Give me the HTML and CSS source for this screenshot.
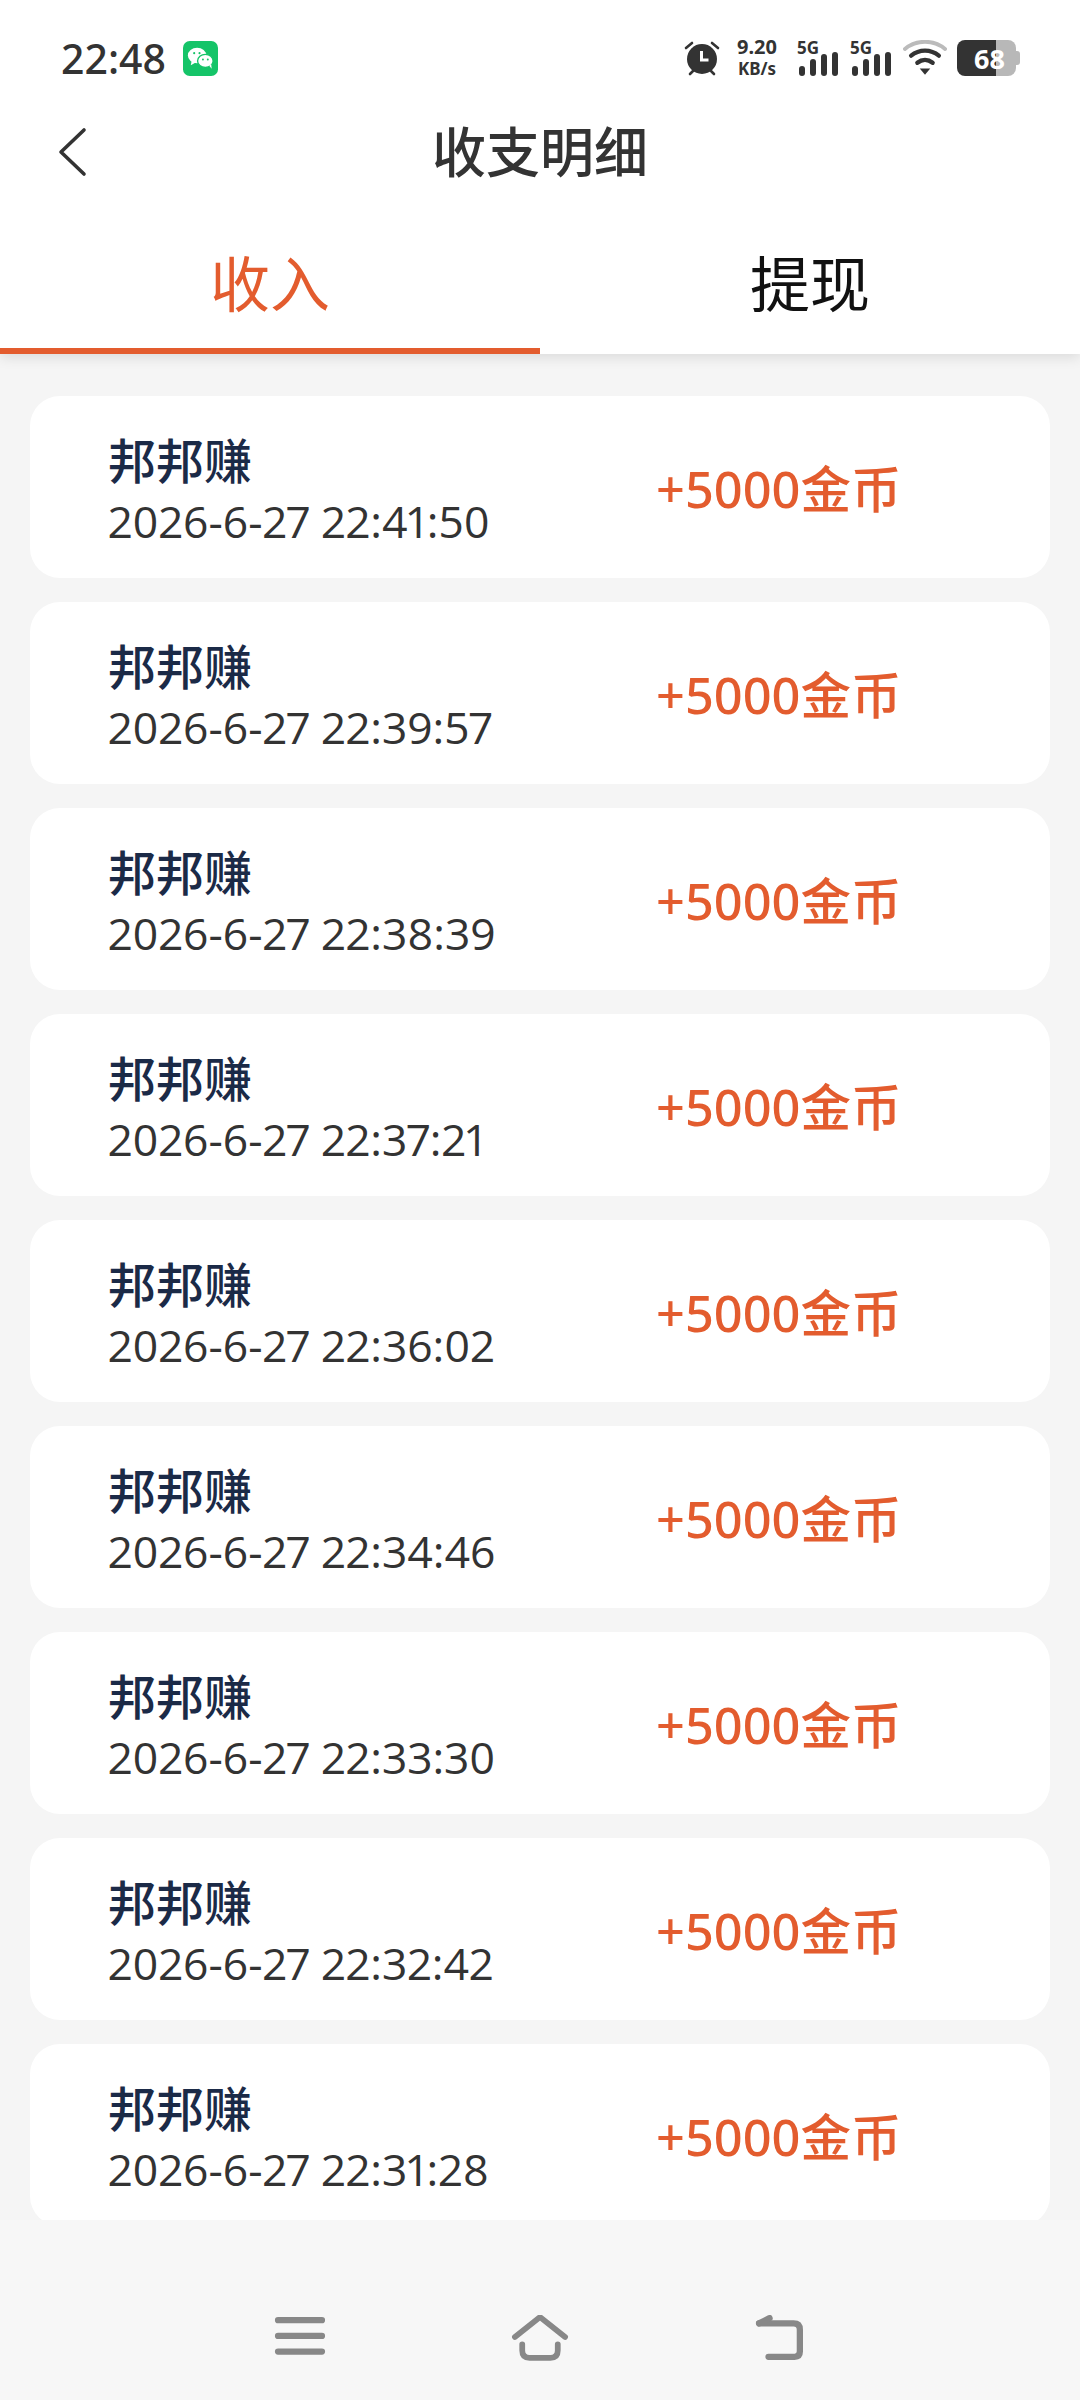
FILE: index.html
```html
<!DOCTYPE html>
<html lang="zh-CN">
<head>
    <meta charset="utf-8">
    <meta name="viewport" content="width=device-width, initial-scale=1.0">
    <title>收支明细</title>
    <link rel="stylesheet" href="styles.css">
</head>
<body>
    <div class="app">
        <div class="status-bar">
            <div class="status-left">
                <span class="clock">22:48</span>
                <svg class="wechat-icon" viewBox="0 0 36 36">
                    <rect width="36" height="36" rx="7" fill="#15c468"/>
                    <ellipse cx="14.5" cy="15" rx="9.5" ry="8" fill="#fff"/>
                    <path d="M9 20l-1 5 5-3z" fill="#fff"/>
                    <ellipse cx="23" cy="20.5" rx="8" ry="6.8" fill="#fff" stroke="#15c468" stroke-width="1.4"/>
                    <path d="M27 25.500l2.500 3-.5-4.500z" fill="#fff"/>
                    <circle cx="11.500" cy="12.500" r="1.100" fill="#15c468"/>
                    <circle cx="17" cy="12.500" r="1.100" fill="#15c468"/>
                    <circle cx="20.500" cy="19" r="1" fill="#15c468"/>
                    <circle cx="25.500" cy="19" r="1" fill="#15c468"/>
                </svg>
            </div>
            <div class="status-right">
                <svg class="alarm-icon" viewBox="0 0 38 38">
                    <circle cx="19" cy="20" r="15" fill="#333"/>
                    <path d="M3 9l6-5M35 9l-6-5M7 35l3-3M31 35l-3-3" stroke="#333" stroke-width="2.600" stroke-linecap="round" fill="none"/>
                    <path d="M18.500 12v9h7" stroke="#fff" stroke-width="3" fill="none"/>
                </svg>
                <div class="net-speed">
                    <span class="speed-num">9.20</span>
                    <span class="speed-unit">KB/s</span>
                </div>
                <div class="signal">
                    <span class="signal-label">5G</span>
                    <div class="signal-bars">
                        <i class="bar-1"></i><i class="bar-2"></i><i class="bar-3"></i><i class="bar-4"></i>
                    </div>
                </div>
                <div class="signal">
                    <span class="signal-label">5G</span>
                    <div class="signal-bars">
                        <i class="bar-1"></i><i class="bar-2"></i><i class="bar-3"></i><i class="bar-4"></i>
                    </div>
                </div>
                <svg class="wifi-icon" viewBox="0 0 46 36">
                    <path d="M2 8.500C14 -1.500 32 -1.500 44 8.500" stroke="#bbb" stroke-width="4" fill="none" stroke-linecap="round"/>
                    <path d="M8.500 15.500C17 8.500 29 8.500 37.500 15.500" stroke="#333" stroke-width="4.500" fill="none" stroke-linecap="round"/>
                    <path d="M15 23c5-4 11-4 16 0" stroke="#333" stroke-width="4.500" fill="none" stroke-linecap="round"/>
                    <path d="M17.500 29h11L23 35.500z" fill="#333"/>
                </svg>
                <div class="battery">
                    <div class="battery-body"><span class="battery-num">68</span></div>
                    <div class="battery-tip"></div>
                </div>
            </div>
        </div>

        <div class="title-bar">
            <svg class="back-icon" viewBox="0 0 30 50">
                <path d="M27 3L4 25l23 22" stroke="#333" stroke-width="3.600" fill="none" stroke-linecap="round" stroke-linejoin="round"/>
            </svg>
            <div class="title">收支明细</div>
        </div>

        <div class="tabs">
            <div class="tab active">收入</div>
            <div class="tab">提现</div>
        </div>

        <div class="record-list">
            <div class="record">
                <div class="record-info"><div class="record-name">邦邦赚</div><div class="record-time">2026-6-27 22:41:50</div></div>
                <div class="record-amount">+5000金币</div>
            </div>
            <div class="record">
                <div class="record-info"><div class="record-name">邦邦赚</div><div class="record-time">2026-6-27 22:39:57</div></div>
                <div class="record-amount">+5000金币</div>
            </div>
            <div class="record">
                <div class="record-info"><div class="record-name">邦邦赚</div><div class="record-time">2026-6-27 22:38:39</div></div>
                <div class="record-amount">+5000金币</div>
            </div>
            <div class="record">
                <div class="record-info"><div class="record-name">邦邦赚</div><div class="record-time">2026-6-27 22:37:21</div></div>
                <div class="record-amount">+5000金币</div>
            </div>
            <div class="record">
                <div class="record-info"><div class="record-name">邦邦赚</div><div class="record-time">2026-6-27 22:36:02</div></div>
                <div class="record-amount">+5000金币</div>
            </div>
            <div class="record">
                <div class="record-info"><div class="record-name">邦邦赚</div><div class="record-time">2026-6-27 22:34:46</div></div>
                <div class="record-amount">+5000金币</div>
            </div>
            <div class="record">
                <div class="record-info"><div class="record-name">邦邦赚</div><div class="record-time">2026-6-27 22:33:30</div></div>
                <div class="record-amount">+5000金币</div>
            </div>
            <div class="record">
                <div class="record-info"><div class="record-name">邦邦赚</div><div class="record-time">2026-6-27 22:32:42</div></div>
                <div class="record-amount">+5000金币</div>
            </div>
            <div class="record">
                <div class="record-info"><div class="record-name">邦邦赚</div><div class="record-time">2026-6-27 22:31:28</div></div>
                <div class="record-amount">+5000金币</div>
            </div>
        </div>

        <div class="nav-bar">
            <svg class="nav-icon" viewBox="0 0 48 44">
                <path d="M3 5h42M3 20h42M3 35h42" stroke="#888" stroke-width="6" stroke-linecap="round" fill="none"/>
            </svg>
            <svg class="nav-icon" viewBox="0 0 54 44">
                <path d="M3 21L27 2l24 19" stroke="#888" stroke-width="5.500" stroke-linecap="round" stroke-linejoin="round" fill="none"/>
                <path d="M10 28v6q0 7 7 7h20q7 0 7-7v-6" stroke="#888" stroke-width="5.500" stroke-linecap="round" fill="none"/>
            </svg>
            <svg class="nav-icon" viewBox="0 0 48 44">
                <path d="M4 8h33q6 0 6 6v21q0 5-5 5H13" stroke="#888" stroke-width="6" stroke-linecap="round" fill="none"/>
                <path d="M4 8l10-5" stroke="#888" stroke-width="6" stroke-linecap="round" fill="none"/>
            </svg>
        </div>
    </div>
</body>
</html>
```

FILE: styles.css
```css
:root {
    --accent-color: #e35c2e;
    --text-color: #333;
    --name-color: #1b2a47;
    --page-bg: #f5f5f5;
}

* {
    box-sizing: border-box;
    margin: 0;
    padding: 0;
}

html, body {
    width: 1080px;
    height: 2400px;
    overflow: hidden;
}

body {
    font-family: "Open Sans", "Noto Sans CJK SC", sans-serif;
    color: var(--text-color);
    background-color: var(--page-bg);
}

.app {
    display: flex;
    flex-direction: column;
    height: 2400px;
}

/* status bar */
.status-bar {
    display: flex;
    justify-content: space-between;
    align-items: center;
    height: 116px;
    padding: 0 60px 0 61px;
    background-color: #fff;
}

.status-left {
    display: flex;
    align-items: center;
    gap: 17px;
}

.clock {
    font-family: "Noto Sans", sans-serif;
    font-size: 41px;
    font-weight: 500;
    line-height: 1;
}

.wechat-icon {
    width: 35px;
    height: 35px;
}

.status-right {
    display: flex;
    align-items: center;
}

.alarm-icon {
    width: 38px;
    height: 38px;
    margin-right: 13px;
}

.net-speed {
    display: flex;
    flex-direction: column;
    align-items: center;
    width: 46px;
    margin-right: 17px;
    font-family: "Noto Sans", sans-serif;
    font-weight: 700;
    color: #333;
}

.speed-num {
    font-size: 20px;
    line-height: 22px;
}

.speed-unit {
    font-size: 17px;
    line-height: 22px;
}

.signal {
    display: flex;
    flex-direction: column;
    width: 42px;
    margin-right: 11px;
}

.signal-label {
    font-family: "Noto Sans", sans-serif;
    font-size: 17px;
    font-weight: 700;
    line-height: 16px;
}

.signal-bars {
    display: flex;
    align-items: flex-end;
    gap: 5px;
    height: 24px;
    margin-top: -4px;
    padding-left: 2px;
}

.signal-bars i {
    display: block;
    width: 6px;
    border-radius: 3px;
    background-color: #333;
}

.bar-1 {
    height: 10px;
}

.bar-2 {
    height: 17px;
}

.bar-3 {
    height: 22px;
}

.bar-4 {
    height: 24px;
}

.wifi-icon {
    width: 44px;
    height: 36px;
    margin-right: 10px;
}

.battery {
    display: flex;
    align-items: center;
}

.battery-body {
    display: flex;
    align-items: center;
    justify-content: center;
    width: 59px;
    height: 36px;
    border-radius: 8px;
    background: linear-gradient(to right, #333 66%, #b8b8b8 66%);
}

.battery-num {
    font-family: "Noto Sans", sans-serif;
    font-size: 27px;
    font-weight: 700;
    line-height: 1;
    color: #fff;
    padding-left: 6px;
}

.battery-tip {
    width: 4px;
    height: 14px;
    border-radius: 0 3px 3px 0;
    background-color: #b8b8b8;
}

/* title bar */
.title-bar {
    position: relative;
    z-index: 1;
    display: flex;
    justify-content: center;
    align-items: center;
    height: 74px;
    padding-bottom: 6px;
    background-color: #fff;
}

.back-icon {
    position: absolute;
    left: 57px;
    top: 11px;
    width: 30px;
    height: 50px;
}

.title {
    font-family: "Noto Sans CJK SC", sans-serif;
    font-size: 54px;
    font-weight: 500;
    line-height: 1;
    color: #333;
}

/* tabs */
.tabs {
    display: flex;
    height: 164px;
    background-color: #fff;
    box-shadow: 0 4px 12px rgba(0, 0, 0, 0.1);
    position: relative;
}

.tab {
    flex: 1;
    display: flex;
    align-items: center;
    justify-content: center;
    padding-top: 16px;
    font-family: "Noto Sans CJK SC", sans-serif;
    font-size: 60px;
    color: #111;
}

.tab.active {
    color: var(--accent-color);
    border-bottom: 6px solid var(--accent-color);
    padding-top: 22px;
}

/* record list */
.record-list {
    display: flex;
    flex-direction: column;
    gap: 24px;
    height: 1866px;
    overflow: hidden;
    padding: 42px 30px 0;
    flex: none;
}

.record {
    flex: none;
    display: flex;
    align-items: center;
    height: 182px;
    padding: 0 0 0 78px;
    border-radius: 30px;
    background-color: #fff;
}

.record-info {
    width: 548px;
    padding-top: 2px;
}

.record-name {
    font-family: "Noto Sans CJK SC", sans-serif;
    font-size: 48px;
    font-weight: 500;
    line-height: 62px;
    color: var(--name-color);
}

.record-time {
    margin-top: 3px;
    font-size: 44.5px;
    line-height: 58px;
    color: var(--text-color);
    font-variant-numeric: proportional-nums;
}

.record-amount {
    font-family: "Noto Sans", "Noto Sans CJK SC", sans-serif;
    font-size: 50.5px;
    font-weight: 500;
    color: var(--accent-color);
    padding-bottom: 2px;
}

/* nav bar */
.nav-bar {
    flex: 1;
    display: flex;
    justify-content: center;
    gap: 180px;
    align-items: center;
    padding-top: 56px;
    background-color: #f7f7f7;
}

.nav-icon {
    height: 46px;
    width: 60px;
}
```
